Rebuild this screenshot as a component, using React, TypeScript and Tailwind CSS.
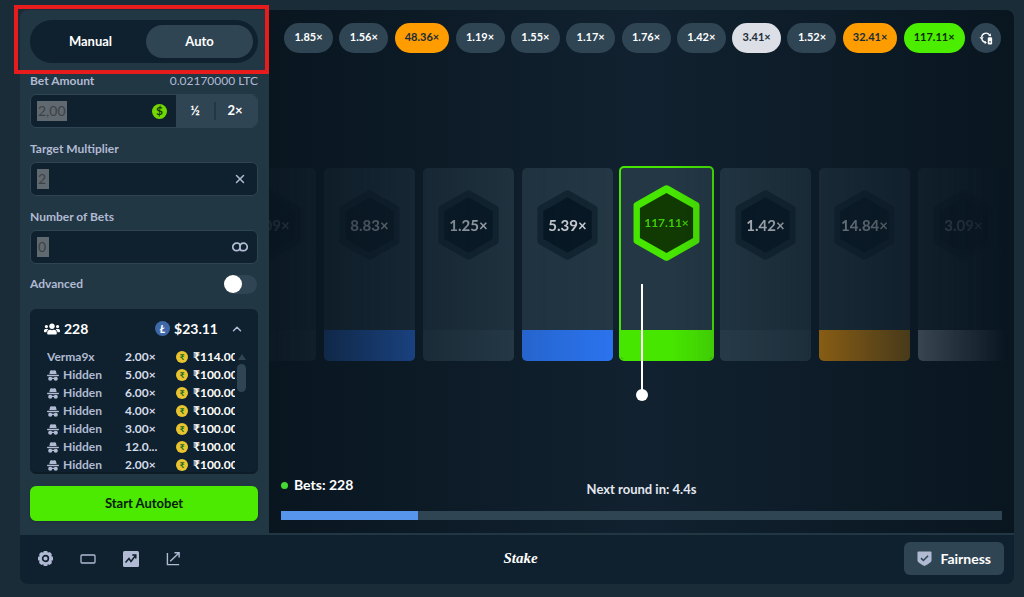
import { FaUsers } from "react-icons/fa";
import { ChevronUp, X } from "lucide-react";
import clsx from "clsx";

const history = [
    { value: "1.85", tone: "slate" },
    { value: "1.56", tone: "slate" },
    { value: "48.36", tone: "orange" },
    { value: "1.19", tone: "slate" },
    { value: "1.55", tone: "slate" },
    { value: "1.17", tone: "slate" },
    { value: "1.76", tone: "slate" },
    { value: "1.42", tone: "slate" },
    { value: "3.41", tone: "white" },
    { value: "1.52", tone: "slate" },
    { value: "32.41", tone: "orange" },
    { value: "117.11", tone: "green" },
];

const pillTones: Record<string, string> = {
    slate: "bg-[#2f4553] text-white",
    orange: "bg-[#ff9d00] text-[#1a2c38]",
    white: "bg-[#dcdfe5] text-[#1a2c38]",
    green: "bg-[#4cee00] text-[#0b2a08]",
};

const cards = [
    { value: "1.09", bar: "bg-[#2f4553]" },
    { value: "8.83", bar: "bg-[#2b73ee]" },
    { value: "1.25", bar: "bg-[#2b3f4c]" },
    { value: "5.39", bar: "bg-[#2b73ee]" },
    { value: "117.11", bar: "bg-[#47e600]", active: true },
    { value: "1.42", bar: "bg-[#2b3f4c]" },
    { value: "14.84", bar: "bg-[#ff9d00]" },
    { value: "3.09", bar: "bg-[#d5dceb]" },
];

const bets = [
    { name: "Verma9x", multiplier: "2.00×", amount: "₹114.00" },
    { name: "", multiplier: "5.00×", amount: "₹100.00" },
    { name: "", multiplier: "6.00×", amount: "₹100.00" },
    { name: "", multiplier: "4.00×", amount: "₹100.00" },
    { name: "", multiplier: "3.00×", amount: "₹100.00" },
    { name: "", multiplier: "12.0...", amount: "₹100.00" },
    { name: "", multiplier: "2.00×", amount: "₹100.00" },
];

const HiddenIcon = () => (
    <svg viewBox="0 0 24 22" className="h-[11px] w-3 shrink-0" fill="currentColor" aria-hidden="true">
        <path d="M6 2.5C6.4.8 7.8 0 9.3.4l2.7.8 2.7-.8C16.200 0 17.600.8 18 2.500L19.300 8H4.700z" />
        <path d="M1 9.500h22c.8 0 1 .8 1 1.400 0 1-1 1.600-2 1.600H2c-1 0-2-.6-2-1.600 0-.6.2-1.400 1-1.400z" />
        <circle cx="6.500" cy="17.500" r="4.200" />
        <circle cx="17.500" cy="17.500" r="4.200" />
        <path d="M9 15.500h6v2.500H9z" />
    </svg>
)

const GearIcon = () => (
    <svg viewBox="0 0 24 24" className="size-[15px]" aria-hidden="true">
        <g fill="currentColor">
            <circle cx="12" cy="12" r="9.500" />
            <rect x="8.500" y="0" width="7" height="24" rx="2" />
            <rect x="8.500" y="0" width="7" height="24" rx="2" transform="rotate(45 12 12)" />
            <rect x="8.500" y="0" width="7" height="24" rx="2" transform="rotate(90 12 12)" />
            <rect x="8.500" y="0" width="7" height="24" rx="2" transform="rotate(135 12 12)" />
        </g>
        <circle cx="12" cy="12" r="4.600" fill="none" stroke="#0f212e" strokeWidth="2.600" />
    </svg>
)

const TheatreIcon = () => (
    <svg viewBox="0 0 16 10" className="h-[10px] w-4" fill="none" stroke="currentColor" strokeWidth="1.300" aria-hidden="true">
        <rect x="1" y="1" width="14" height="8" rx="1" />
    </svg>
)

const StatsIcon = () => (
    <svg viewBox="0 0 16 16" className="size-4" aria-hidden="true">
        <rect width="16" height="16" rx="1.500" fill="currentColor" />
        <path d="M2.500 11.500 6 7.500l2 3 4.500-6M9.300 4h3.500v3.500" fill="none" stroke="#0f212e" strokeWidth="1.500" />
    </svg>
)

const PopOutIcon = () => (
    <svg viewBox="0 0 16 16" className="size-[15px]" fill="none" stroke="currentColor" strokeWidth="1.500" aria-hidden="true">
        <path d="M1.500 2v12.500H14M4.500 11 13.500 2.300M9 1.800h5v5" />
    </svg>
)

const ShieldIcon = () => (
    <svg viewBox="0 0 16 16" className="size-[15px]" aria-hidden="true">
        <path d="M1.500.500h13a1 1 0 0 1 1 1V10c0 2-5 4.500-7.500 6C5.500 14.500.500 12 .500 10V1.500a1 1 0 0 1 1-1z" fill="#b1bad3" />
        <path d="m4.300 7.600 2.500 2.500 5-5" fill="none" stroke="#2f4553" strokeWidth="1.700" />
    </svg>
)

const RoundsIcon = () => (
    <svg viewBox="0 0 16 16" className="size-[14px]" fill="none" stroke="currentColor" strokeWidth="1.500" aria-hidden="true">
        <path d="M3 7A5 5 0 0 1 12 4.500M3.300 9.500A5 5 0 0 0 7.500 13" />
        <path d="M.500 7h5L3 10zM10.500 5.800 13.800 6l-.6-3.400zM6.500 11v4l2.500-2z" fill="currentColor" stroke="none" />
        <rect x="10" y="7" width="5" height="8.500" rx="1.500" fill="currentColor" stroke="none" />
        <path d="M11.700 12.500h1.800" stroke="#2f4553" />
    </svg>
)

const Hexagon = ({ value, active }: { value: string, active?: boolean }) => (
    <div className={clsx("relative flex items-center justify-center", active ? "h-[76px] w-[67px]" : "h-[70px] w-[61px]")}>
        <svg viewBox="0 0 66 76" preserveAspectRatio="none" className="absolute inset-0 size-full" aria-hidden="true">
            <path
                d="M31 .800q2-1 4 0l29 16.600q1.500.8 1.500 2.600v36q0 1.800-1.500 2.600L35 75.200q-2 1-4 0L2 58.600Q.500 57.800.500 56V20q0-1.800 1.500-2.600z"
                fill={ active ? "#47e600" : "#132532" }
            />
            <path d="M33 8 59.200 23v30L33 68 6.800 53V23z" fill={ active ? "#113a03" : "#071824" } />
        </svg>
        <span className={clsx("relative leading-5", active ? "text-xs font-bold text-[#3fce06]" : "text-[15px] font-bold text-[#d3d7de]")}>
            { value }×
        </span>
    </div>
)

const Sidebar = () => (
    <aside className="flex w-[249px] shrink-0 flex-col bg-[#213743] pt-[10px] pr-[11px] pb-3 pl-[10px] text-xs font-bold text-[#b1bad3]">
        <div className="flex h-[43px] rounded-full bg-[#0f212e] p-[5px] text-[13px] text-white">
            <button type="button" className="flex-1 rounded-full">Manual</button>
            <button type="button" className="w-[107px] rounded-full bg-[#2f4553]">Auto</button>
        </div>

        <div className="mt-[11px] flex flex-col gap-[14px]">
            <div className="flex flex-col gap-[6px]">
                <div className="flex h-[14px] items-center justify-between">
                    <label htmlFor="amount">Bet Amount</label>
                    <span className="font-normal">0.02170000 LTC</span>
                </div>
                <div className="flex h-[34px] overflow-hidden rounded-md border border-[#2f4553] bg-[#0f212e]">
                    <div className="flex flex-1 items-center justify-between pr-[9px] pl-[6px]">
                        <input id="amount" defaultValue="2,00" className="h-5 field-sizing-content bg-[#60696f] px-px text-sm font-normal text-[#3c4146] outline-none" />
                        <span className="flex size-[15px] items-center justify-center rounded-full bg-[#72d900] text-[12px] leading-none text-[#173b12]">$</span>
                    </div>
                    <div className="flex w-[81px] items-center bg-[#2f4553] text-[13px] text-white">
                        <button type="button" className="w-[38px]">½</button>
                        <span className="h-[18px] w-0.5 bg-[#213743]"></span>
                        <button type="button" className="w-[38px]">2×</button>
                    </div>
                </div>
            </div>

            <div className="flex flex-col gap-[6px]">
                <label htmlFor="target" className="h-[14px] leading-[14px]">Target Multiplier</label>
                <div className="flex h-[34px] items-center justify-between rounded-md border border-[#2f4553] bg-[#0f212e] pr-[10px] pl-[6px]">
                    <input id="target" defaultValue="2" className="h-5 field-sizing-content min-w-3 bg-[#60696f] px-px text-sm font-normal text-[#3c4146] outline-none" />
                    <X size={14} strokeWidth={2.5} />
                </div>
            </div>

            <div className="flex flex-col gap-[6px]">
                <label htmlFor="count" className="h-[14px] leading-[14px]">Number of Bets</label>
                <div className="flex h-[34px] items-center justify-between rounded-md border border-[#2f4553] bg-[#0f212e] pr-[9px] pl-[6px]">
                    <input id="count" defaultValue="0" className="h-5 field-sizing-content min-w-3 bg-[#60696f] px-px text-sm font-normal text-[#3c4146] outline-none" />
                    <svg viewBox="0 0 16 10" className="h-[10px] w-4" fill="none" stroke="currentColor" strokeWidth="1.700" aria-label="Unlimited">
                        <path d="M6.500 1.200H4.500a3.500 3.500 0 0 0 0 7.500C7 8.700 8 7 8 5s1-3.800 3.500-3.800a3.500 3.500 0 0 1 0 7.500h-2M6.500 1.200C7.500 1.600 8 3 8 5s.5 3.300 1.500 3.700" />
                    </svg>
                </div>
            </div>
        </div>

        <div className="mt-[10px] flex h-5 items-center justify-between">
            <label htmlFor="advanced">Advanced</label>
            <input
                id="advanced"
                type="checkbox"
                className="mr-px h-[19px] w-[33px] appearance-none rounded-full bg-[#2f4553] before:block before:size-[18px] before:rounded-full before:bg-white"
            />
        </div>

        <section className="mt-[15px] flex h-[165px] flex-col overflow-hidden rounded-md border-b-2 border-[#0d1c27] bg-[#0f212e]">
            <div className="flex h-[39px] shrink-0 items-center pr-[14px] pl-[14px] text-sm text-white">
                <FaUsers size={16} />
                <span className="ml-1">228</span>
                <span className="ml-auto flex size-[15px] items-center justify-center rounded-full bg-[#3f68a9] text-[11px] leading-none italic">Ł</span>
                <span className="mr-3 ml-1">$23.11</span>
                <ChevronUp size={14} strokeWidth={2.5} className="text-[#b1bad3]" />
            </div>
            <div className="flex min-h-0 flex-1 gap-0.5 overflow-hidden pr-3 pl-[17px]">
                <div className="min-w-0 flex-1 overflow-hidden">
                    <table className="w-full table-fixed">
                        <tbody>
                            { bets.map((bet, i) => (
                                <tr key={i} className="h-[18px]">
                                    <td className="w-[78px] p-0 leading-[18px]">
                                        { bet.name || <span className="flex items-center gap-1"><HiddenIcon /> Hidden</span> }
                                    </td>
                                    <td className="w-[51px] p-0 leading-[18px] text-[#d5dceb]">{ bet.multiplier }</td>
                                    <td className="overflow-hidden p-0 leading-[18px] text-white">
                                        <span className="flex items-center gap-[5px]">
                                            <span className="flex size-3 shrink-0 items-center justify-center rounded-full bg-[#e9c42f] text-[8px] leading-none text-[#0d6b2c]">₹</span>
                                            { bet.amount }
                                        </span>
                                    </td>
                                </tr>
                            )) }
                        </tbody>
                    </table>
                </div>
                <div className="flex w-[9px] flex-col items-center gap-1 pt-1.5">
                    <svg viewBox="0 0 8 6" className="h-1.5 w-2" fill="#2f4553" aria-hidden="true"><path d="M4 0 8 6H0z" /></svg>
                    <span className="h-7 w-[9px] rounded-full bg-[#2f4553]"></span>
                </div>
            </div>
        </section>

        <button type="button" className="mt-3 h-[35px] rounded-md bg-[#4cea00] text-[13px] text-[#05200a] shadow-sm">Start Autobet</button>
    </aside>
)

const Stage = () => (
    <main className="relative flex min-w-0 flex-1 flex-col bg-linear-to-r from-[#091620] via-[#11212f] to-[#091620]">
        <div className="flex justify-between pt-[13px] pr-[13px] pl-[15px]">
            { history.map((round) => (
                <button
                    key={round.value}
                    type="button"
                    className={clsx("h-[30px] min-w-[49px] rounded-full px-[10px] pb-0.5 text-[11px] font-bold", pillTones[round.tone])}
                >
                    { round.value }×
                </button>
            )) }
            <button type="button" aria-label="Past rounds" className="flex size-[30px] items-center justify-center rounded-full bg-[#2f4553] text-white">
                <RoundsIcon />
            </button>
        </div>

        <div className="relative mt-[113px]">
            <div className="flex items-end justify-center gap-2 overflow-hidden pr-[49px] mask-[linear-gradient(to_right,rgba(0,0,0,0.08)_0%,rgba(0,0,0,0.2)_8%,rgba(0,0,0,0.45)_20%,rgba(0,0,0,0.85)_35%,black_46%,black_54%,rgba(0,0,0,0.82)_62%,rgba(0,0,0,0.5)_74%,rgba(0,0,0,0.25)_86%,transparent_99%)]">
                { cards.map((card) => (
                    <div
                        key={card.value}
                        className={clsx(
                            "flex shrink-0 flex-col overflow-hidden rounded-[5px] bg-[#243744]",
                            card.active ? "-mx-0.5 h-[195px] w-[95px] border-2 border-[#47e600]" : "h-[193px] w-[91px]"
                        )}
                    >
                        <div className={clsx("flex flex-1 justify-center", card.active ? "pt-[17px]" : "pt-[22px]")}>
                            <Hexagon value={card.value} active={card.active} />
                        </div>
                        <div className={clsx(card.active ? "h-[29px]" : "h-[31px]", card.bar)}></div>
                    </div>
                )) }
            </div>
            {/* needle */}
            <div className="absolute top-[118px] left-1/2 flex -translate-x-1/2 flex-col items-center">
                <span className="h-[106px] w-0.5 bg-white"></span>
                <span className="-mt-px size-3 rounded-full bg-white"></span>
            </div>
        </div>

        <div className="mt-auto px-3 pb-[13px]">
            <div className="grid grid-cols-3 items-start leading-5 font-bold text-white">
                <span className="flex items-center gap-[6px] text-sm leading-5">
                    <i className="size-[7px] rounded-full bg-[#44dc32]"></i>
                    Bets: 228
                </span>
                <span className="pt-1 text-center text-[13px] text-[#e3e7ee]">Next round in: 4.4s</span>
            </div>
            <div className="mt-3 h-[9px] bg-[#2f4553]">
                <div className="h-full w-[19%] bg-[#5795ed]"></div>
            </div>
        </div>
    </main>
)

const Footer = () => (
    <footer className="grid h-[51px] grid-cols-3 items-center border-t-2 border-[#213743] bg-[#0f212e] pr-[10px] pb-0.5 pl-[17px] text-[#b1bad3]">
        <div className="flex gap-[27px]">
            <button type="button" aria-label="Settings" className="flex w-4 justify-center"><GearIcon /></button>
            <button type="button" aria-label="Theatre mode" className="flex w-4 items-center"><TheatreIcon /></button>
            <button type="button" aria-label="Live stats" className="flex w-4 items-center"><StatsIcon /></button>
            <button type="button" aria-label="Pop out" className="flex w-4 items-center"><PopOutIcon /></button>
        </div>
        <a href="#" className="justify-self-center font-['Liberation_Serif',serif] text-[15px] font-bold text-white italic">Stake</a>
        <button type="button" className="flex h-[33px] items-center gap-2 justify-self-end rounded-md bg-[#2f4553] px-[13px] text-sm font-bold text-white">
            <ShieldIcon /> Fairness
        </button>
    </footer>
)

export default function App() {
    return (
        <div className="relative min-h-screen bg-[#1a2c38] pt-[10px] pr-[10px] pb-[13px] pl-5 font-[Lato,'Noto_Sans',sans-serif]">
            <div className="overflow-hidden rounded-lg">
                <div className="flex">
                    <Sidebar />
                    <Stage />
                </div>
                <Footer />
            </div>
            {/* marker over the mode tabs */}
            <div className="pointer-events-none absolute top-[5px] left-[14px] h-[69px] w-[255px] border-4 border-[#e81c1c]"></div>
        </div>
    )
}
